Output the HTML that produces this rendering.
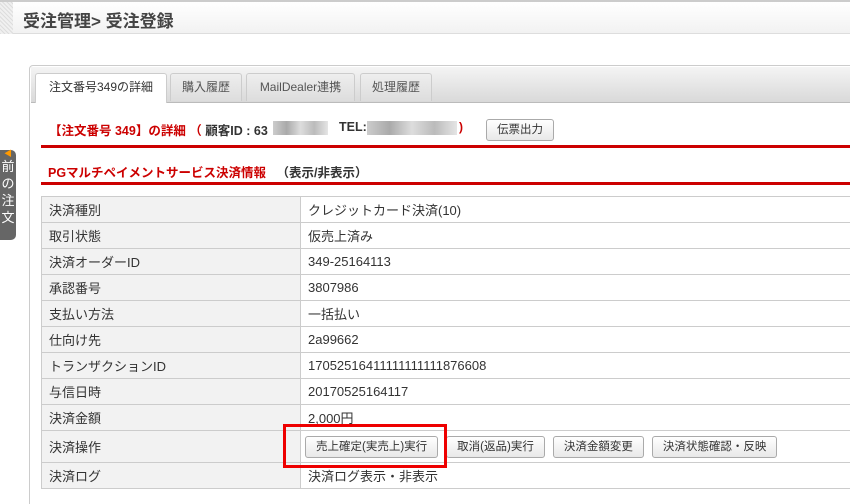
<!DOCTYPE html><html style="width:850px;height:504px;overflow:hidden"><head><meta charset="utf-8"><style>
body{margin:0;width:850px;height:504px;background:#fff;font-family:"Liberation Sans","Noto Sans CJK JP",sans-serif;font-size:12px;color:#333;position:relative;overflow:hidden}
.a{position:absolute}
.hd{left:0;top:0;width:850px;height:34px;background:linear-gradient(#fff,#f2f2f2);border-top:2px solid #ccc;border-bottom:1px solid #ddd;box-sizing:border-box}
.hd .st{left:0;top:0;width:13px;height:32px;background:repeating-linear-gradient(45deg,#ddd 0 1px,#f0f0f0 1px 3px)}
.hd .t{left:23px;top:5px;font-size:17px;font-weight:bold;color:#444}
.side{left:0;top:150px;width:16px;height:90px;background:#666;border-radius:0 5px 5px 0;color:#fff;font-size:13px;line-height:17px;text-align:center}
.panel{left:29px;top:65px;width:830px;height:460px;border:1px solid #ccc;border-radius:4px;box-sizing:border-box}
.strip{left:31px;top:67px;width:819px;height:35px;background:linear-gradient(#f4f4f4,#d9d9d9);border-bottom:1px solid #bbb}
.tab{top:73px;height:28px;border:1px solid #ccc;border-bottom:none;border-radius:3px 3px 0 0;background:linear-gradient(#eee,#ddd);box-sizing:border-box;text-align:center;line-height:27px;color:#555;font-size:12px}
.tab.on{background:#fff;height:30px;color:#333}
.red{color:#c00;font-weight:bold;font-size:12px}
.rl{left:41px;width:809px;height:3px;background:#c00}
table{position:absolute;left:41px;top:196px;width:820px;border-collapse:collapse}
td{border:1px solid #ccc;height:25px;padding:0 0 0 7px;font-size:13px;color:#333}
td.l{background:#f2f2f2;width:251px}
.btn{display:inline-block;border:1px solid #aaa;border-radius:3px;background:linear-gradient(#fff,#e8e8e8);padding:0 10px;height:20px;line-height:20px;font-size:11.5px;margin-right:8px}
.blur{background:linear-gradient(90deg,#ccc,#aaa,#ddd,#bbb,#e5e5e5);height:14px}
</style></head><body>
<div class="a hd"><div class="a st"></div><div class="a t">受注管理&gt; 受注登録</div></div>
<div class="a side"><span style="color:#f90;font-size:8px;line-height:8px;display:block">◀</span>前<br>の<br>注<br>文</div>
<div class="a panel"></div>
<div class="a strip"></div>
<div class="a tab on" style="left:35px;width:132px">注文番号349の詳細</div>
<div class="a tab" style="left:170px;width:72px">購入履歴</div>
<div class="a tab" style="left:246px;width:109px">MailDealer連携</div>
<div class="a tab" style="left:360px;width:72px">処理履歴</div>
<div class="a" style="left:49px;top:120px;font-size:12.5px;font-weight:bold"><span style="color:#c00">【注文番号 349】の詳細 （</span> 顧客ID : 63</div>
<div class="a blur" style="left:273px;top:121px;width:55px"></div>
<div class="a" style="left:339px;top:120px;font-weight:bold;font-size:12.5px">TEL:</div>
<div class="a blur" style="left:367px;top:121px;width:90px"></div>
<div class="a red" style="left:459px;top:120px">)</div>
<div class="a btn" style="left:486px;top:119px">伝票出力</div>
<div class="a rl" style="top:145px"></div>
<div class="a" style="left:48px;top:162px;font-weight:bold;font-size:12.5px"><span style="color:#c00">PGマルチペイメントサービス決済情報</span>&nbsp;&nbsp;&nbsp;（表示/非表示）</div>
<div class="a rl" style="top:182px"></div>
<table>
<tr><td class="l">決済種別</td><td>クレジットカード決済(10)</td></tr>
<tr><td class="l">取引状態</td><td>仮売上済み</td></tr>
<tr><td class="l">決済オーダーID</td><td>349-25164113</td></tr>
<tr><td class="l">承認番号</td><td>3807986</td></tr>
<tr><td class="l">支払い方法</td><td>一括払い</td></tr>
<tr><td class="l">仕向け先</td><td>2a99662</td></tr>
<tr><td class="l">トランザクションID</td><td>17052516411111111111876608</td></tr>
<tr><td class="l">与信日時</td><td>20170525164117</td></tr>
<tr><td class="l">決済金額</td><td>2,000円</td></tr>
<tr><td class="l" style="height:31px">決済操作</td><td style="padding-left:4px"><span class="btn">売上確定(実売上)実行</span><span class="btn">取消(返品)実行</span><span class="btn">決済金額変更</span><span class="btn">決済状態確認・反映</span></td></tr>
<tr><td class="l">決済ログ</td><td>決済ログ表示・非表示</td></tr>
</table>
<div class="a" style="left:283px;top:424px;width:158px;height:38px;border:3px solid #e00"></div>
</body></html>
